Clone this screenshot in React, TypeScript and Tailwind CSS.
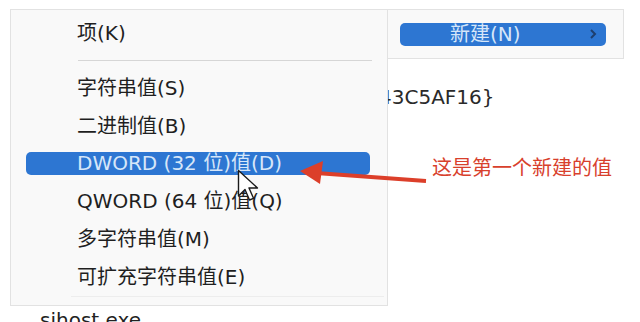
import React from 'react';

const subItems = [
  { label: '字符串值(S)' },
  { label: '二进制值(B)' },
  { label: 'DWORD (32 位)值(D)', active: true },
  { label: 'QWORD (64 位)值(Q)' },
  { label: '多字符串值(M)' },
  { label: '可扩充字符串值(E)' },
];

function MenuRow({ label, active }: { label: string; active?: boolean }) {
  return (
    <div className="h-[38px] flex items-center pl-[15px] pr-[17px]">
      <div
        className={
          active
            ? 'flex-1 h-[23px] rounded-[5px] bg-[#2d76d2] text-[#d6e6f9] flex items-center pl-[51px]'
            : 'flex-1 h-[23px] text-[#1f1f1f] flex items-center pl-[51px]'
        }
      >
        {label}
      </div>
    </div>
  );
}

export default function App() {
  return (
    <div
      className="relative w-[640px] h-[322px] bg-white overflow-hidden text-[20px] leading-none"
      style={{ fontFamily: '"DejaVu Sans", "Noto Sans CJK SC", sans-serif' }}
    >
      {/* Window content behind the menus */}
      <div className="pt-[87px] pl-[379px] text-[#2a2a2a]">{'43C5AF16}'}</div>
      <div className="pt-[203px] pl-[40px] text-[#222]">sihost.exe</div>

      {/* Submenu */}
      <div className="absolute left-[10px] top-[9px] w-[378px] h-[297px] bg-[#f9f9f9] border border-[#e2e2e2] pt-[4px] flex flex-col">
        <MenuRow label="项(K)" />
        <div className="h-[17px] flex items-center pl-[67px] pr-[15px]">
          <div className="flex-1 h-px bg-[#d6d6d6]" />
        </div>
        {subItems.map((item) => (
          <MenuRow key={item.label} label={item.label} active={item.active} />
        ))}
        <div className="mt-auto mb-[8px] ml-[60px] mr-[3px] h-px bg-[#ededed]" />
      </div>

      {/* Parent menu */}
      <div className="absolute left-[387px] top-[9px] w-[237px] h-[50px] bg-[#f9f9f9] border border-[#e2e2e2] flex items-center pl-[12px] pr-[17px]">
        <div className="flex-1 h-[23px] rounded-[5px] bg-[#2d76d2] text-[#d6e6f9] flex items-center pl-[50px] pr-[8px]">
          <span className="flex-1">新建(N)</span>
          <svg width="10" height="12" viewBox="0 0 10 12">
            <path d="M3 2 L7 6 L3 10" fill="none" stroke="#1e3f6e" strokeWidth="2" />
          </svg>
        </div>
      </div>

      {/* Annotation arrow */}
      <svg className="absolute left-0 top-0" width="640" height="322" viewBox="0 0 640 322">
        <path d="M316 173 L426 181" stroke="#dc3f2a" strokeWidth="4" fill="none" />
        <path d="M300 171 L323 161 L320 184 Z" fill="#dc3f2a" />
      </svg>
      <div
        className="absolute left-[432px] top-[157px] text-[20px] text-[#d8402c]"
        style={{ fontFamily: '"Noto Sans CJK SC", sans-serif' }}
      >
        这是第一个新建的值
      </div>

      {/* Mouse pointer */}
      <svg className="absolute left-[237px] top-[169px]" width="24" height="34" viewBox="0 0 24 34">
        <path
          d="M1.5 1.5 L1.5 27 L8 20.5 L12.5 31 L16.5 29.3 L12 19 L20.5 19 Z"
          fill="#ffffff"
          stroke="#1a1a1a"
          strokeWidth="1.4"
          strokeLinejoin="round"
        />
      </svg>
    </div>
  );
}
